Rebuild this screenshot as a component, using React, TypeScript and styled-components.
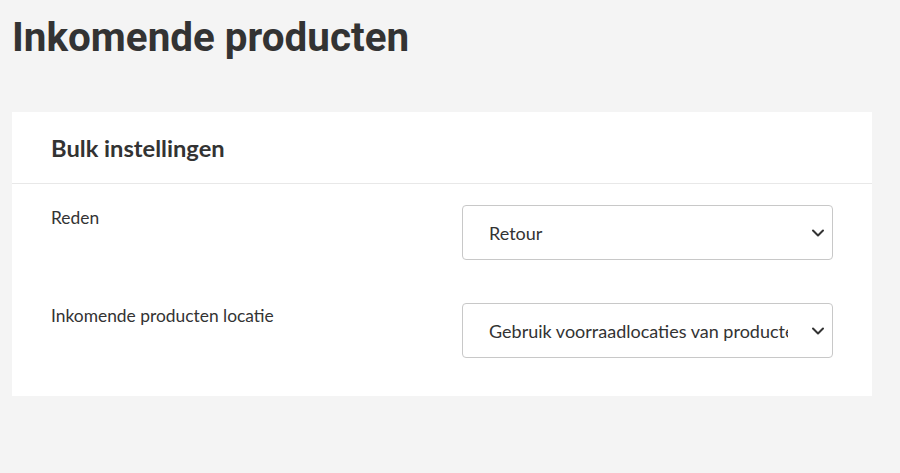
import React from "react";
import styled, { createGlobalStyle } from "styled-components";

const Global = createGlobalStyle`
  html, body { margin: 0; padding: 0; background: #f4f4f4; }
  body { font-family: Lato, "Open Sans", sans-serif; color: #333; }
  * { box-sizing: border-box; }
`;

const Page = styled.div`
  padding: 12px 28px 0 12px;
`;

const Title = styled.h1`
  margin: 0 0 48px 0;
  font-family: Roboto, sans-serif;
  font-weight: 700;
  font-size: 40.4px;
  line-height: 52px;
  color: #333;
`;

const Card = styled.section`
  background: #fff;
  width: 860px;
`;

const CardHeader = styled.div`
  padding: 0 39px;
  height: 72px;
  display: flex;
  align-items: center;
  border-bottom: 1px solid #e8e8e8;
`;

const CardTitle = styled.h2`
  margin: 0;
  font-family: Lato, sans-serif;
  font-weight: 700;
  font-size: 23.7px;
  color: #333;
`;

const CardBody = styled.div`
  padding: 21px 39px 38px;
  display: flex;
  flex-direction: column;
  gap: 43px;
`;

const Row = styled.div`
  display: grid;
  grid-template-columns: 1fr 371px;
  align-items: start;
`;

const Label = styled.label`
  padding-top: 1px;
  font-size: 17.4px;
  line-height: 24px;
  color: #333;
`;

const SelectWrap = styled.div`
  position: relative;
`;

const Select = styled.select`
  appearance: none;
  -webkit-appearance: none;
  width: 100%;
  height: 55px;
  border: 1px solid #c8c8c8;
  border-radius: 4px;
  background: #fff;
  padding: 0 44px 0 26px;
  font-family: Lato, sans-serif;
  font-size: 18px;
  color: #333;
  outline: none;
`;

const Chevron = styled.svg`
  position: absolute;
  right: 7px;
  top: 50%;
  transform: translateY(-50%);
  pointer-events: none;
`;

function Field({ label, value, options }: { label: string; value: string; options: string[] }) {
  return (
    <Row>
      <Label>{label}</Label>
      <SelectWrap>
        <Select defaultValue={value}>
          {options.map((o) => (
            <option key={o} value={o}>{o}</option>
          ))}
        </Select>
        <Chevron width="16" height="12" viewBox="0 0 16 12">
          <path d="M3 3.5 L8 8.5 L13 3.5" fill="none" stroke="#333" strokeWidth="2" strokeLinecap="round" strokeLinejoin="round" />
        </Chevron>
      </SelectWrap>
    </Row>
  );
}

export default function App() {
  return (
    <>
      <Global />
      <Page>
        <Title>Inkomende producten</Title>
        <Card>
          <CardHeader>
            <CardTitle>Bulk instellingen</CardTitle>
          </CardHeader>
          <CardBody>
            <Field label="Reden" value="Retour" options={["Retour", "Inkoop", "Correctie"]} />
            <Field
              label="Inkomende producten locatie"
              value="Gebruik voorraadlocaties van producten"
              options={["Gebruik voorraadlocaties van producten", "Standaard locatie"]}
            />
          </CardBody>
        </Card>
      </Page>
    </>
  );
}
